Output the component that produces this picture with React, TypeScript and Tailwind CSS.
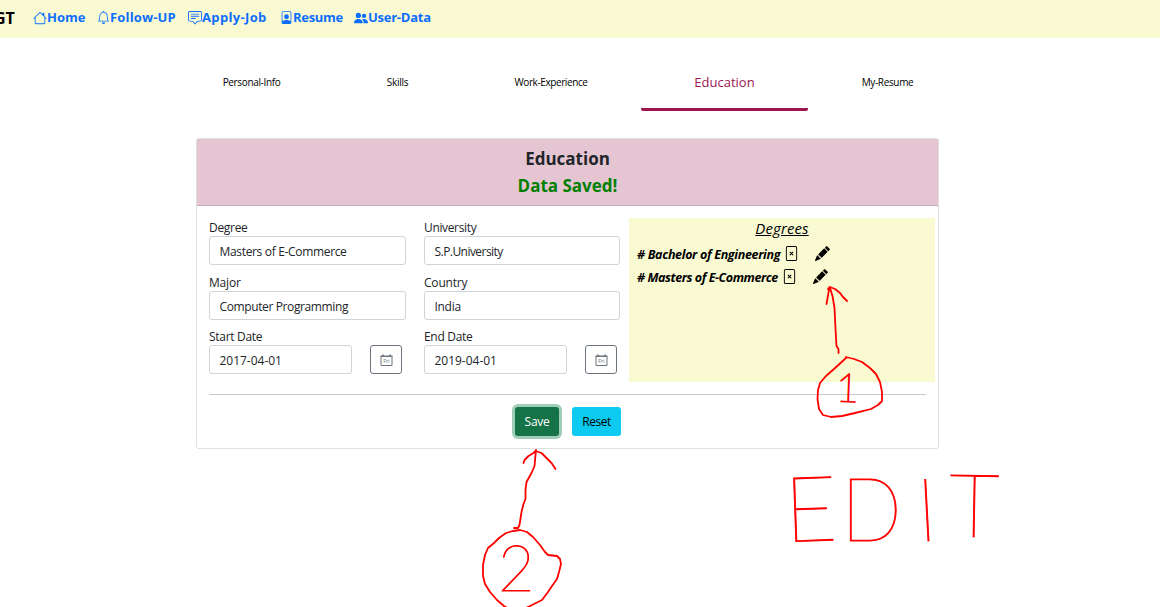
import type { ReactNode } from "react";
import {
  BsBell,
  BsChatSquareText,
  BsFilePerson,
  BsFileX,
  BsHouse,
  BsPencilFill,
  BsPeopleFill,
} from "react-icons/bs";

function NavLink({ icon, label, className, labelClass }: { icon: ReactNode; label: string; className: string; labelClass: string }) {
  return (
    <a className={`flex shrink-0 items-center whitespace-nowrap font-bold text-[#0d6efd] ${className}`}>
      {icon}
      <span className={labelClass}>{label}</span>
    </a>
  );
}

function Tab({ label, className }: { label: string; className: string }) {
  return (
    <div className={`flex h-[55px] shrink-0 items-center justify-center whitespace-nowrap text-[10px] text-black ${className}`}>
      {label}
    </div>
  );
}

function Field({ label, value, labelClass, valueClass }: { label: string; value: string; labelClass: string; valueClass: string }) {
  return (
    <div>
      <div className={`h-[18px] leading-[20px] ${labelClass}`}>{label}</div>
      <div className={`h-[29px] rounded-[3px] border border-[#ced4da] pl-[9.5px] leading-[29px] ${valueClass}`}>{value}</div>
    </div>
  );
}

function CalendarIcon() {
  return (
    <svg className="mt-px" width="13" height="13" viewBox="0 0 13 13" fill="none" stroke="#6c757d">
      <path d="M1 2.5v9h11v-9" strokeWidth="1" />
      <path d="M.5 2.3h12M3 .5v2M10 .5v2" strokeWidth="1.6" />
      <text x="6.5" y="9.3" fontSize="5.5" textAnchor="middle" fill="#6c757d" stroke="none" fontFamily="Open Sans, sans-serif">Fri</text>
    </svg>
  );
}

function DateField({ label, value, labelClass }: { label: string; value: string; labelClass: string }) {
  return (
    <div className="flex items-end">
      <div className="w-[143px]">
        <Field label={label} value={value} labelClass={labelClass} valueClass="tracking-[-0.02px]" />
      </div>
      <div className="ml-[18px] flex h-[29px] w-8 items-center justify-center rounded-[3px] border border-[#6c757d]">
        <CalendarIcon />
      </div>
    </div>
  );
}

function Degree({ name, className }: { name: string; className: string }) {
  return (
    <div className="flex h-[23px] items-center whitespace-nowrap pl-2 text-[12.5px] font-bold italic text-black">
      <span className={`pt-[3px] ${className}`}># {name}</span>
      <BsFileX className="ml-[4px] shrink-0" size={15} />
      <BsPencilFill className="ml-[16px] shrink-0" size={15} />
    </div>
  );
}

function Ink() {
  return (
    <div className="pointer-events-none absolute inset-0 font-['Lato'] font-thin text-[#ff0000] [-webkit-text-stroke:0.9px_#ff0000]">
      <svg width="1160" height="607" fill="none" stroke="#ff0000" strokeWidth="1.8" strokeLinecap="round" strokeLinejoin="round">
        <path d="M838.5 353v-4l-2-3-1-17-1-21-2-12-2.5-8-.5-1-3 17M828 289l2-2 5 2 5 4 3 4 4 4" />
        <path d="M846 358l-12 11-8 7-6 7-2 7-.5 9 1.5 10 4 6 8 2 11-1 13-3 16-4 7-4 4-4v-9l-2-10-4-8-6-6-8-6-8-3-8-2z" />
        <path d="M514 528h4l1.5-3 2-13 2-8 2-5v-9l1-8 5-9 3-7 1.5-16M523.5 463l1-3 4-4 5-3 2-2 6 2 5 5 5 5 4 6" />
        <path d="M545 552l-5-7-7-8-6-5-7-2-7 1-7 2-7 5-5 5-6 5-3 7-2 10v11l2 8 5 8 7 8 7 6 5 3h15l8-4 10-5 6-8 4-6 5-7 2-7 2-8-1-5-3-3-9-1z" />
      </svg>
      <span className="absolute left-[836px] top-[367px] rotate-[2deg] text-[40px] leading-none [-webkit-text-stroke:1.3px_#ff0000]">1</span>
      <span className="absolute left-[498px] top-[535px] text-[63px] leading-none">2</span>
      <span className="absolute left-[784px] top-[460px] -rotate-2 text-[91px] leading-none">E</span>
      <span className="absolute left-[841px] top-[463px] origin-left scale-x-[0.91] text-[88px] leading-none">D</span>
      <span className="absolute left-[916px] top-[463px] -rotate-3 text-[88px] leading-none">I</span>
      <span className="absolute left-[949px] top-[459px] rotate-1 text-[88px] leading-none">T</span>
    </div>
  );
}

export default function App() {
  return (
    <div className="relative h-[607px] w-[1160px] overflow-hidden bg-white font-['Open_Sans','Noto_Sans',sans-serif] text-[12px] text-[#212529]">
      <nav className="flex h-[38px] items-center bg-[#fafad2] pb-[3px] text-[13px]">
        <div className="-ml-[6px] w-[39px] shrink-0 text-[16px] font-bold tracking-[-0.2px] text-black">GT</div>
        <NavLink className="w-[64px]" icon={<BsHouse size={14} />} label="Home" labelClass="" />
        <NavLink className="w-[91px]" icon={<BsBell size={13} />} label="Follow-UP" labelClass="tracking-[0.16px]" />
        <NavLink className="w-[92px]" icon={<BsChatSquareText size={14} />} label="Apply-Job" labelClass="tracking-[0.35px]" />
        <NavLink className="w-[74px]" icon={<BsFilePerson size={13} />} label="Resume" labelClass="tracking-[-0.3px]" />
        <NavLink className="w-[90px]" icon={<BsPeopleFill className="-scale-x-100" size={14} />} label="User-Data" labelClass="tracking-[-0.25px]" />
      </nav>

      <div className="ml-[196px] flex pt-[17px]">
        <Tab className="w-[111px] tracking-[-0.35px]" label="Personal-Info" />
        <Tab className="ml-[35px] w-[111px] tracking-[-0.3px]" label="Skills" />
        <Tab className="ml-[35px] w-[126px] tracking-[-0.4px]" label="Work-Experience" />
        <div className="ml-[27px] flex h-[56px] w-[167px] shrink-0 items-center justify-center rounded-[2px] border-b-[3px] border-[#9c1550] pt-[3px] text-[13px] text-[#9c1550]">Education</div>
        <Tab className="ml-[24px] w-[111px] tracking-[-0.35px]" label="My-Resume" />
      </div>

      <main className="ml-[196px] mt-[27px] h-[311px] w-[743px] rounded-[3px] border border-[#dfdfdf]">
        <header className="flex h-[67px] flex-col items-center border-b border-[#c4abb7] bg-[#e6c5d3] pt-[6px] text-[17px] font-bold leading-[27px]">
          <div>Education</div>
          <div className="text-[#008000]">Data Saved!</div>
        </header>
        <div className="flex pl-3 pt-3">
          <div className="flex w-[197px] flex-col gap-[7.5px]">
            <Field label="Degree" value="Masters of E-Commerce" labelClass="tracking-[-0.3px]" valueClass="tracking-[-0.33px]" />
            <Field label="Major" value="Computer Programming" labelClass="tracking-[-0.2px]" valueClass="tracking-[-0.38px]" />
            <DateField label="Start Date" value="2017-04-01" labelClass="tracking-[-0.3px]" />
          </div>
          <div className="ml-[18px] flex w-[196px] flex-col gap-[7.5px]">
            <Field label="University" value="S.P.University" labelClass="tracking-[-0.35px]" valueClass="tracking-[-0.55px]" />
            <Field label="Country" value="India" labelClass="tracking-[-0.2px]" valueClass="tracking-[-0.3px]" />
            <DateField label="End Date" value="2019-04-01" labelClass="tracking-[-0.3px]" />
          </div>
          <section className="ml-[9px] h-[164px] w-[306px] bg-[#fafad2]">
            <h2 className="h-[24px] text-center text-[15px] italic leading-[20px] text-black underline tracking-[0.1px]">Degrees</h2>
            <Degree name="Bachelor of Engineering" className="tracking-[-0.33px]" />
            <Degree name="Masters of E-Commerce" className="tracking-[-0.44px]" />
          </section>
        </div>
        <div className="ml-3 mt-3 h-px w-[717px] bg-[#c8c9ca]" />
        <div className="mt-3 flex">
          <button className="ml-[318px] h-[29px] w-[44px] rounded-[3px] bg-[#157347] text-white ring-[3px] ring-[#a0cdb8] tracking-[-0.3px]">Save</button>
          <button className="ml-[13px] h-[29px] w-[49px] rounded-[3px] bg-[#0dcaf0] text-black tracking-[-0.45px]">Reset</button>
        </div>
      </main>
      <Ink />
    </div>
  );
}
